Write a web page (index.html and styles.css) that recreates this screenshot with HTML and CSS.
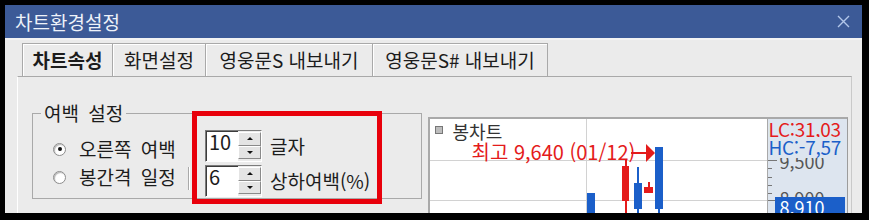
FILE: index.html
```html
<!DOCTYPE html>
<html lang="ko">
<head>
  <meta charset="UTF-8">
  <title>차트환경설정</title>
  <link rel="stylesheet" href="styles.css">
</head>
<body>
  <div class="window">
    <div class="titlebar">
      <span class="title">차트환경설정</span>
      <svg class="close" width="13" height="13" viewBox="0 0 13 13">
        <path d="M1 1 L12 12 M12 1 L1 12" stroke="#b3c7ea" stroke-width="1.4" fill="none"/>
      </svg>
    </div>

    <div class="content">
      <div class="tabs">
        <div class="tab active" style="width:91px">차트속성</div>
        <div class="tab" style="width:93px">화면설정</div>
        <div class="tab" style="width:167px">영웅문S 내보내기</div>
        <div class="tab" style="width:175px">영웅문S# 내보내기</div>
      </div>

      <div class="panel">
        <fieldset class="group">
          <legend>여백 설정</legend>
          <div class="options">
            <label class="radio"><span class="dot on"></span>오른쪽 여백</label>
            <label class="radio"><span class="dot"></span>봉간격 일정</label>
          </div>
          <div class="sep"></div>
          <div class="spins">
            <div class="spin-row">
              <div class="spin">
                <span class="num">10</span>
                <span class="arrows"><span class="arrow up"></span><span class="arrow down"></span></span>
              </div>
              <span>글자</span>
            </div>
            <div class="spin-row">
              <div class="spin">
                <span class="num">6</span>
                <span class="arrows"><span class="arrow up"></span><span class="arrow down"></span></span>
              </div>
              <span>상하여백(%)</span>
            </div>
          </div>
        </fieldset>

        <div class="chart">
          <div class="plot">
            <div class="grid-h" style="top:41px"></div>
            <div class="grid-h" style="top:81px"></div>
            <div class="grid-v" style="left:156px"></div>

            <span class="legend-box"></span>
            <span class="series">봉차트</span>
            <span class="high">최고 9,640 (01/12)</span>
            <svg class="pointer" width="24" height="18" viewBox="0 0 24 18">
              <path d="M0 9 H16" stroke="#e41b1b" stroke-width="2"/>
              <polygon points="15,0 24,9 15,18" fill="#e41b1b"/>
            </svg>

            <!-- candles: left, top, width, height -->
            <div class="candle blue" style="left:157px;top:74px;width:8px;height:40px"></div>
            <div class="wick red" style="left:195px;top:41px;height:70px"></div>
            <div class="candle red" style="left:192px;top:47px;width:7px;height:35px"></div>
            <div class="wick blue" style="left:207px;top:48px;height:60px"></div>
            <div class="candle blue" style="left:204px;top:64px;width:8px;height:26px"></div>
            <div class="wick red" style="left:218px;top:63px;height:6px"></div>
            <div class="candle red" style="left:214px;top:68px;width:9px;height:6px"></div>
            <div class="wick blue" style="left:228px;top:80px;height:30px"></div>
            <div class="candle blue" style="left:225px;top:28px;width:8px;height:62px"></div>
          </div>

          <div class="axis">
            <div class="tick major" style="top:41px"></div>
            <div class="tick" style="top:49px"></div>
            <div class="tick" style="top:58px"></div>
            <div class="tick" style="top:66px"></div>
            <div class="tick" style="top:74px"></div>
            <div class="tick major" style="top:81px"></div>
            <span class="price" style="top:32px">9,500</span>
            <span class="price" style="top:69px">8,900</span>
            <span class="lc">LC:31,03</span>
            <span class="hc">HC:-7,57</span>
            <span class="current">8,910</span>
          </div>
        </div>
      </div>
    </div>
  </div>
</body>
</html>
```

FILE: styles.css
```css
*,
*::before,
*::after {
  box-sizing: border-box;
}
body {
  margin: 0;
  background: #000;
  font-family: "Noto Sans CJK KR", sans-serif;
  font-size: 19px;
  color: #1c1c1c;
  overflow: hidden;
}
.window {
  margin: 5px 7px 0 5px;
  height: 208px;
  overflow: hidden;
  background: #ebebeb;
}
.titlebar {
  height: 35px;
  background: #3c5a97;
  border-bottom: 2px solid #f3f3f3;
  display: flex;
  align-items: center;
  justify-content: space-between;
  padding: 0 12px 0 10px;
}
.title {
  color: #eef2f9;
  line-height: 20px;
}
.content {
  padding: 3px 10px 0 12px;
}

/* tabs */
.tabs {
  display: flex;
  padding-left: 5px;
}
.tab {
  height: 33px;
  border-top: 1px solid #a9a9a9;
  border-right: 1px solid #a9a9a9;
  box-shadow: inset 1px 1px 0 #fff;
  display: flex;
  align-items: center;
  justify-content: center;
  line-height: 20px;
  white-space: nowrap;
}
.tab:first-child {
  border-left: 1px solid #a9a9a9;
}
.tab.active {
  font-weight: 700;
}
.panel {
  height: 140px;
  border-top: 1px solid #a9a9a9;
  border-left: 1px solid #fff;
  border-right: 1px solid #c9c9c9;
  display: flex;
  align-items: flex-start;
  padding: 26px 3px 0 14px;
}

/* group box */
.group {
  margin: 0;
  padding: 0;
  width: 390px;
  height: 96px;
  border: 1px solid #a9a9a9;
  display: flex;
  align-items: flex-start;
}
.group legend {
  margin-left: 8px;
  padding: 0 3px;
  line-height: 20px;
  word-spacing: 4px;
}
.options {
  width: 142px;
  display: flex;
  flex-direction: column;
  padding: 12px 0 0 20px;
}
.radio {
  height: 28px;
  display: flex;
  align-items: center;
  gap: 13px;
  line-height: 20px;
  word-spacing: 4px;
  white-space: nowrap;
}
.dot {
  position: relative;
  flex: none;
  width: 13px;
  height: 13px;
  border-radius: 50%;
  background: #fff;
  border: 1px solid #8c8c8c;
  box-shadow: inset 1px 1px 1px #b5b5b5;
}
.dot.on::after {
  content: "";
  position: absolute;
  left: 3.5px;
  top: 3.5px;
  width: 4px;
  height: 4px;
  border-radius: 50%;
  background: #111;
}
.sep {
  width: 2px;
  height: 23px;
  margin: 44px 0 0 13px;
  border-left: 1px solid #a9a9a9;
  border-right: 1px solid #fff;
}
.spins {
  position: relative;
  display: flex;
  flex-direction: column;
  gap: 3px;
  margin: 7px 0 0 15px;
}
/* red highlight drawn over the spin boxes */
.spins::after {
  content: "";
  position: absolute;
  left: -13px;
  top: -19px;
  width: 190px;
  height: 93px;
  border: 5px solid #e8000b;
}
.spin-row {
  height: 32px;
  display: flex;
  align-items: center;
  gap: 8px;
  line-height: 20px;
  white-space: nowrap;
}
.spin {
  width: 57px;
  height: 32px;
  display: flex;
  background: #fff;
  border-top: 1px solid #7b7b7b;
  border-left: 1px solid #7b7b7b;
  border-bottom: 1px solid #fff;
  border-right: 1px solid #fff;
  box-shadow: inset 1px 1px 0 #3c3c3c;
}
.num {
  width: 32px;
  padding: 1px 0 0 3px;
  font-size: 20px;
  line-height: 20px;
}
.arrows {
  width: 23px;
  display: flex;
  flex-direction: column;
  padding: 1px 0 2px;
  background: #ebebeb;
}
.arrow {
  flex: 1;
  display: flex;
  align-items: center;
  justify-content: center;
  background: #e4e4e4;
  border: 1px solid;
  border-color: #fff #8a8a8a #8a8a8a #fff;
}
.arrow::before {
  content: "";
  border-left: 3px solid transparent;
  border-right: 3px solid transparent;
}
.arrow.up::before {
  border-bottom: 3px solid #111;
}
.arrow.down::before {
  border-top: 3px solid #111;
}

/* chart preview */
.chart {
  width: 421px;
  height: 120px;
  margin: 14px 0 0 6px;
  display: flex;
  border-top: 2px solid #a9a9a9;
  border-left: 2px solid #a9a9a9;
  border-right: 1px solid #9c9c9c;
}
.plot {
  position: relative;
  width: 337px;
  background: #fff;
  overflow: hidden;
}
.grid-h {
  position: absolute;
  left: 0;
  right: 0;
  height: 1px;
  background: #d2d2d2;
}
.grid-v {
  position: absolute;
  top: 0;
  bottom: 0;
  width: 1px;
  background: #d2d2d2;
}
.legend-box {
  position: absolute;
  left: 5px;
  top: 7px;
  width: 8px;
  height: 8px;
  background: #bdbdbd;
  border: 1px solid #777;
}
.series {
  position: absolute;
  left: 23px;
  top: 2px;
  font-size: 18px;
  line-height: 20px;
  color: #333;
}
.high {
  position: absolute;
  left: 42px;
  top: 23px;
  font-size: 20px;
  line-height: 20px;
  color: #e41b1b;
  white-space: nowrap;
}
.pointer {
  position: absolute;
  left: 201px;
  top: 25px;
}
.candle,
.wick {
  position: absolute;
}
.wick {
  width: 2px;
}
.red {
  background: #e41b1b;
}
.blue {
  background: #1b5fc9;
}
.axis {
  position: relative;
  flex: 1;
  background: #dde5ef;
  border-left: 1px solid #a9a9a9;
  overflow: hidden;
}
.tick {
  position: absolute;
  left: 0;
  width: 4px;
  height: 1px;
  background: #777;
}
.tick.major {
  width: 9px;
}
.price {
  position: absolute;
  left: 12px;
  font-size: 18px;
  line-height: 20px;
  color: #555;
}
.lc,
.hc {
  position: absolute;
  left: 1px;
  right: 0;
  height: 21px;
  font-size: 19px;
  line-height: 20px;
  letter-spacing: -0.3px;
  background: #dde5ef;
  white-space: nowrap;
}
.lc {
  top: 0;
  color: #e41b1b;
}
.hc {
  top: 18px;
  color: #1b5fc9;
}
.current {
  position: absolute;
  left: 7px;
  top: 78px;
  width: 70px;
  height: 30px;
  padding-left: 5px;
  font-size: 18px;
  line-height: 20px;
  color: #fff;
  background: #1b5fc9;
}
```
